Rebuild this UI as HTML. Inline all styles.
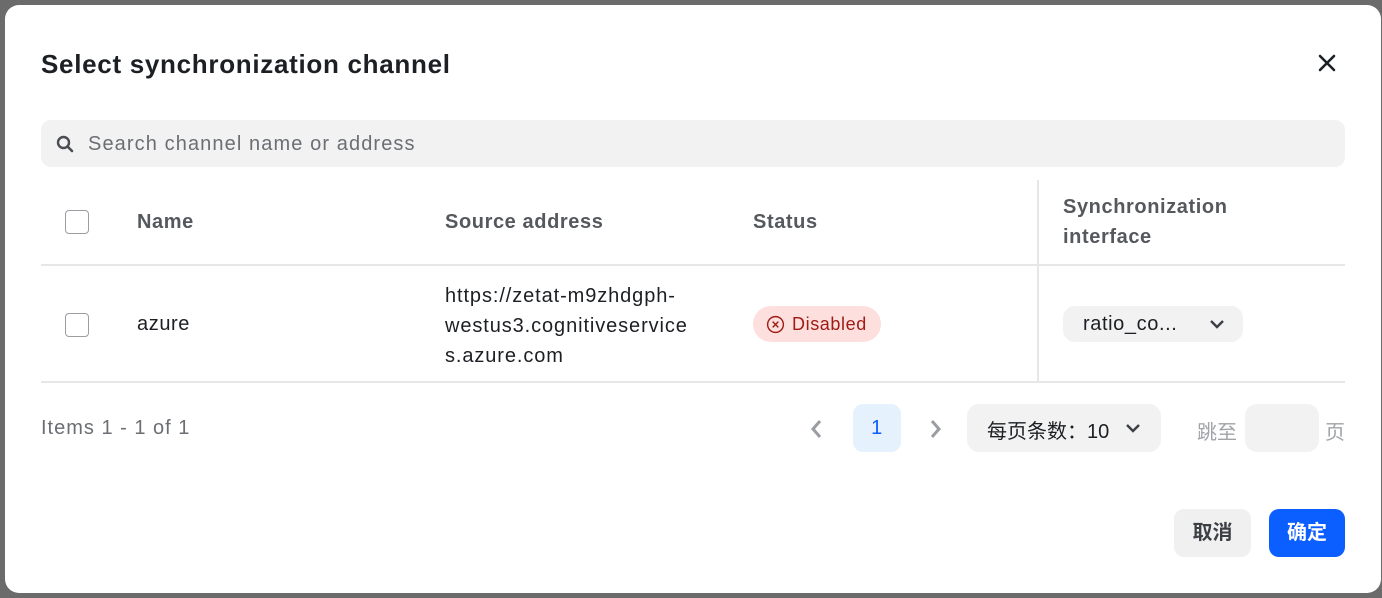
<!DOCTYPE html>
<html><head><meta charset="utf-8"><style>
*{box-sizing:border-box;margin:0;padding:0}
body{width:1382px;height:598px;background:#6b6b6b;font-family:"Liberation Sans","Noto Sans CJK SC",sans-serif;position:relative;overflow:hidden;color:#1c1f23;letter-spacing:0.6px}
.m{position:absolute;left:5px;top:5px;width:1376px;height:588px;background:#fff;border-radius:14px}
.a{position:absolute}
.t{left:36px;top:44px;font-size:26px;font-weight:bold;color:#1c1f23;letter-spacing:0.7px}
.x{left:1310px;top:46px}
.s{left:36px;top:115px;width:1304px;height:47px;background:#f2f2f3;border-radius:10px}
.s span{position:absolute;left:47px;top:13px;font-size:20px;color:#6b6e73;letter-spacing:1.1px}
.cb{width:24px;height:24px;border:1.5px solid #9a9da1;border-radius:4px;background:#fff}
.h{font-size:20px;font-weight:bold;color:#55585c}
.line{background:#e6e7e8}
.d{font-size:20px;color:#1c1f23}
</style></head><body>
<div class="m">
<div class="a t">Select synchronization channel</div>
<svg class="a x" width="24" height="24" viewBox="0 0 24 24"><path d="M5 5L19 19M19 5L5 19" stroke="#1c1f23" stroke-width="2.6" stroke-linecap="round"/></svg>
<div class="a s"><svg class="a" style="left:15px;top:15px" width="18" height="18" viewBox="0 0 18 18"><circle cx="7.5" cy="7.5" r="5.5" fill="none" stroke="#4a4d52" stroke-width="2.4"/><path d="M11.5 11.5L16 16" stroke="#4a4d52" stroke-width="2.6" stroke-linecap="round"/></svg><span>Search channel name or address</span></div>
<div class="a cb" style="left:60px;top:205px"></div>
<div class="a h" style="left:132px;top:206px">Name</div>
<div class="a h" style="left:440px;top:206px">Source address</div>
<div class="a h" style="left:748px;top:206px">Status</div>
<div class="a h" style="left:1058px;top:187px;line-height:30px">Synchronization<br>interface</div>
<div class="a line" style="left:1032px;top:175px;width:2px;height:201px"></div>
<div class="a line" style="left:36px;top:259px;width:1304px;height:2px"></div>
<div class="a cb" style="left:60px;top:308px"></div>
<div class="a d" style="left:132px;top:308px">azure</div>
<div class="a d" style="left:440px;top:276px;line-height:30px;letter-spacing:0.9px">https://zetat-m9zhdgph-<br>westus3.cognitiveservice<br>s.azure.com</div>
<div class="a" style="left:748px;top:301px;width:128px;height:36px;background:#fde0dd;border-radius:18px;color:#a11b16;font-size:18px;padding:8px 0 0 39px">Disabled
<svg class="a" style="left:13px;top:9px" width="19" height="19" viewBox="0 0 20 20"><circle cx="10" cy="10" r="8.3" fill="none" stroke="#a11b16" stroke-width="1.5"/><path d="M7 7L13 13M13 7L7 13" stroke="#a11b16" stroke-width="1.5"/></svg></div>
<div class="a" style="left:1058px;top:301px;width:180px;height:36px;background:#f2f2f3;border-radius:12px;font-size:20px;padding:7px 0 0 20px">ratio_co...
<svg class="a" style="left:146px;top:12px" width="16" height="12" viewBox="0 0 16 12"><path d="M2 3L8 9L14 3" fill="none" stroke="#3c3f44" stroke-width="2.4"/></svg></div>
<div class="a line" style="left:36px;top:376px;width:1304px;height:2px"></div>
<div class="a" style="left:36px;top:412px;font-size:20px;color:#6b6e73;letter-spacing:1px">Items 1 - 1 of 1</div>
<svg class="a" style="left:804px;top:413px" width="14" height="22" viewBox="0 0 14 22"><path d="M11 3L4 11L11 19" fill="none" stroke="#9a9da1" stroke-width="3"/></svg>
<div class="a" style="left:848px;top:399px;width:48px;height:48px;background:#e6f1fe;border-radius:10px;color:#0b5eff;font-size:20px;text-align:center;line-height:48px">1</div>
<svg class="a" style="left:924px;top:413px" width="14" height="22" viewBox="0 0 14 22"><path d="M3 3L10 11L3 19" fill="none" stroke="#9a9da1" stroke-width="3"/></svg>
<div class="a" style="left:962px;top:399px;width:194px;height:48px;background:#f2f2f3;border-radius:12px;font-size:20px;padding:11px 0 0 20px;letter-spacing:0">每页条数：10
<svg class="a" style="left:158px;top:18px" width="16" height="12" viewBox="0 0 16 12"><path d="M2 3L8 9L14 3" fill="none" stroke="#3c3f44" stroke-width="2.4"/></svg></div>
<div class="a" style="left:1192px;top:411px;font-size:20px;color:#a0a3a7;letter-spacing:0">跳至</div>
<div class="a" style="left:1240px;top:399px;width:74px;height:48px;background:#f2f2f3;border-radius:12px"></div>
<div class="a" style="left:1320px;top:411px;font-size:20px;color:#a0a3a7">页</div>
<div class="a" style="left:1169px;top:504px;width:77px;height:48px;background:#f0f0f1;border-radius:10px;font-size:20px;font-weight:bold;color:#3c3f44;text-align:center;line-height:48px;letter-spacing:0">取消</div>
<div class="a" style="left:1264px;top:504px;width:76px;height:48px;background:#0b5eff;border-radius:10px;font-size:20px;font-weight:bold;color:#fff;text-align:center;line-height:48px;letter-spacing:0">确定</div>
</div>
</body></html>
